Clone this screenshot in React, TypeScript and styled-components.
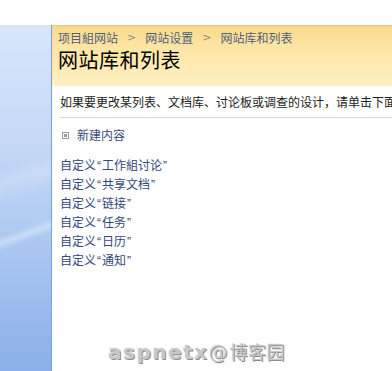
import React from 'react';
import styled, { createGlobalStyle } from 'styled-components';

const Global = createGlobalStyle`
  html, body {
    margin: 0;
    padding: 0;
    background: #fff;
    overflow: hidden;
  }
  body {
    font-family: "Noto Sans CJK SC", "DejaVu Sans", sans-serif;
  }
`;

const Page = styled.div`
  width: 392px;
  height: 371px;
  display: flex;
  flex-direction: column;
  position: relative;
  overflow: hidden;
`;

const TopStrip = styled.div`
  height: 25px;
  background: #fff;
`;

const Body = styled.div`
  flex: 1;
  display: flex;
`;

const Sidebar = styled.div`
  width: 51px;
  border-right: 1px solid #7f9fd6;
  background:
    linear-gradient(160deg, transparent 58%, rgba(255, 255, 255, 0.35) 60%, transparent 62%),
    linear-gradient(165deg, transparent 40%, rgba(255, 255, 255, 0.18) 44%, transparent 50%),
    linear-gradient(180deg, #d8e6fb 0%, #c4d8f6 35%, #a6c3f0 70%, #8cafe9 100%);
`;

const Main = styled.div`
  flex: 1;
  display: flex;
  flex-direction: column;
  min-width: 0;
`;

const Header = styled.div`
  height: 61px;
  box-sizing: border-box;
  padding: 4px 0 0 6px;
  border-top: 1px solid #e5c98a;
  background: linear-gradient(180deg, #f9d98c 0%, #fde4a0 30%, #fff0c4 100%);
`;

const Crumbs = styled.div`
  display: flex;
  align-items: center;
  gap: 9px;
  font-size: 12px;
  line-height: 16px;
  color: #4f5f7c;
  white-space: nowrap;
`;

const Sep = styled.span`
  color: #8a8a8a;
  font-family: "DejaVu Sans", sans-serif;
  font-size: 11px;
`;

const Title = styled.h1`
  margin: 1px 0 0 0;
  font-size: 20px;
  font-weight: normal;
  line-height: 26px;
  color: #000;
  white-space: nowrap;
  letter-spacing: 0.5px;
`;

const Description = styled.div`
  margin-top: 3px;
  margin-left: 8px;
  padding: 4px 0 7px;
  border-bottom: 1px solid #d6d6d6;
  font-size: 12px;
  line-height: 17px;
  color: #222;
  white-space: nowrap;
  overflow: hidden;
`;

const Section = styled.div`
  display: flex;
  align-items: center;
  gap: 8px;
  margin: 9px 0 0 10px;
  font-size: 12px;
  line-height: 16px;
  color: #3b4a78;
`;

const ToggleBox = styled.span`
  width: 7px;
  height: 7px;
  box-sizing: border-box;
  border: 1px solid #9a9a9a;
  background: #fff;
  display: flex;
  align-items: center;
  justify-content: center;
  &::after {
    content: '';
    width: 3px;
    height: 3px;
    background: #9a9a9a;
  }
`;

const LinkList = styled.ul`
  list-style: none;
  margin: 13px 0 0 8px;
  padding: 0;
`;

const LinkItem = styled.li`
  font-size: 12px;
  line-height: 18px;
  color: #34477a;
  white-space: nowrap;
`;

const Quote = styled.span`
  font-family: "Liberation Sans", Arial, sans-serif;
  padding: 0 1px;
`;

const Watermark = styled.div`
  position: absolute;
  left: 108px;
  top: 338px;
  display: flex;
  align-items: baseline;
  line-height: 26px;
  color: #c8c8c8;
  text-shadow: 1px 1px 0 #8c8c8c, -1px -1px 0 #f6f6f6;
  white-space: nowrap;
`;

const WaterLatin = styled.span`
  font-family: "DejaVu Sans", sans-serif;
  font-weight: bold;
  font-size: 20px;
  letter-spacing: 1.5px;
`;

const WaterCjk = styled.span`
  font-size: 18px;
  letter-spacing: 0.5px;
`;

const WaterAt = styled.span`
  font-family: "DejaVu Sans", sans-serif;
  font-size: 19px;
  margin-right: 2px;
`;

const links = ['工作組讨论', '共享文档', '链接', '任务', '日历', '通知'];

export default function App() {
  return (
    <Page>
      <Global />
      <TopStrip />
      <Body>
        <Sidebar />
        <Main>
          <Header>
            <Crumbs>
              <span>项目組网站</span>
              <Sep>&gt;</Sep>
              <span>网站设置</span>
              <Sep>&gt;</Sep>
              <span>网站库和列表</span>
            </Crumbs>
            <Title>网站库和列表</Title>
          </Header>
          <Description>如果要更改某列表、文档库、讨论板或调查的设计，请单击下面的相应名称。</Description>
          <Section>
            <ToggleBox />
            <span>新建内容</span>
          </Section>
          <LinkList>
            {links.map((l) => (
              <LinkItem key={l}>
                自定义<Quote>“</Quote>{l}<Quote>”</Quote>
              </LinkItem>
            ))}
          </LinkList>
        </Main>
      </Body>
      <Watermark>
        <WaterLatin>aspnetx</WaterLatin>
        <WaterAt>@</WaterAt>
        <WaterCjk>博客园</WaterCjk>
      </Watermark>
    </Page>
  );
}
